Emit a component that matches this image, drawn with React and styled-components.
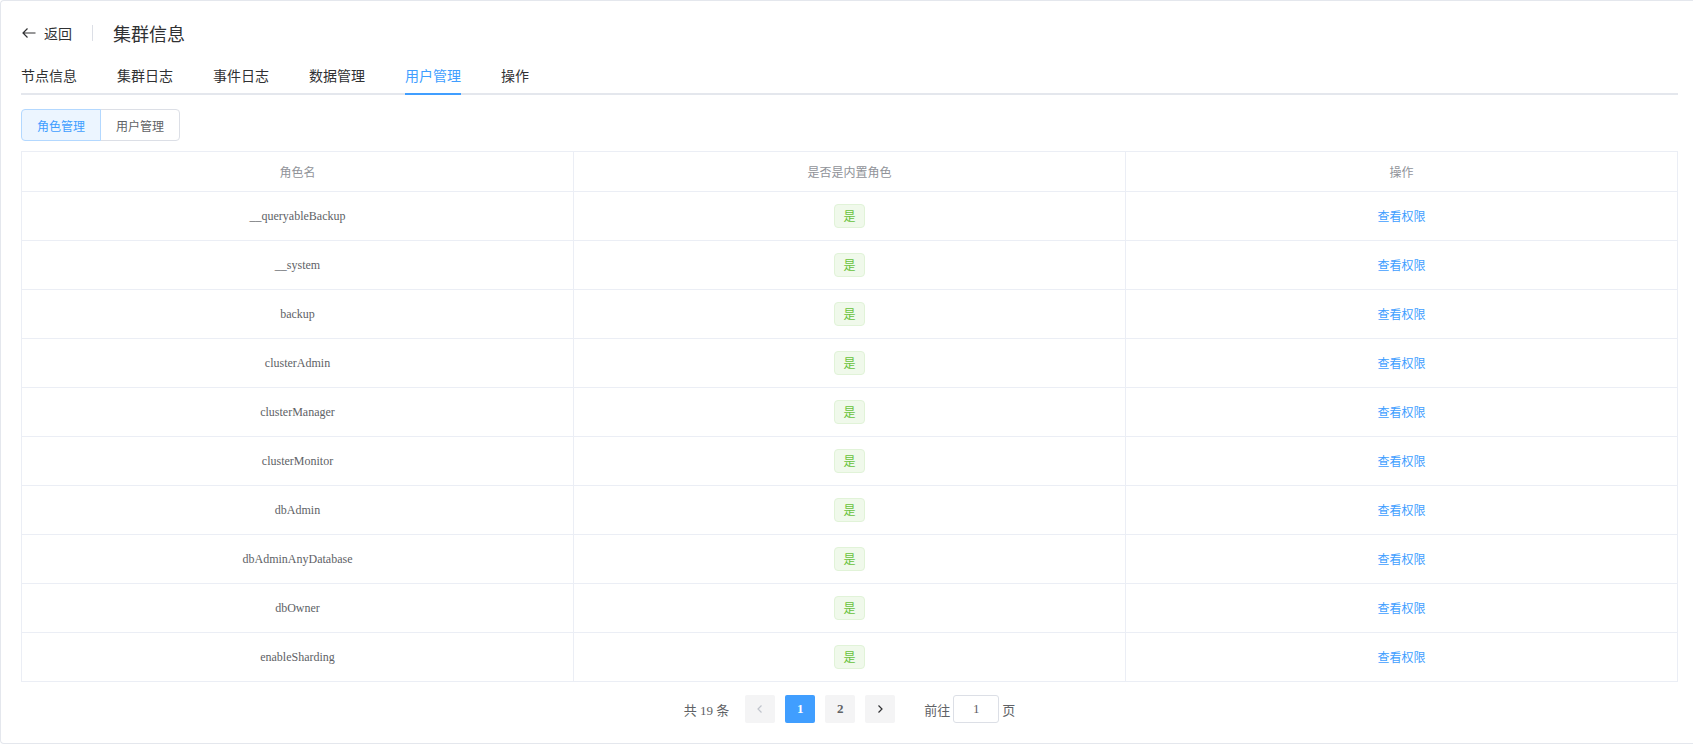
import React from "react";
import styled, { createGlobalStyle } from "styled-components";

const Global = createGlobalStyle`
  html, body { margin: 0; padding: 0; background: #fff; }
  body { font-family: "Liberation Serif", "Noto Sans CJK SC", serif; }
  * { box-sizing: border-box; }
`;

const Card = styled.div`
  width: 100%;
  height: 744px;
  border: 1px solid #e4e7ed;
  border-right: none;
  border-radius: 4px 0 0 4px;
  padding: 20px 15px 20px 20px;
  background: #fff;
  display: flex;
  flex-direction: column;
`;

const PageHeader = styled.div`
  display: flex;
  align-items: center;
  height: 24px;
  line-height: 24px;
  color: #303133;
`;

const Back = styled.div`
  display: flex;
  align-items: center;
  gap: 7px;
  font-size: 14px;
  font-family: "Noto Sans CJK SC", sans-serif;
  cursor: pointer;
`;

const Divider = styled.span`
  width: 1px;
  height: 16px;
  background: #dcdfe6;
  margin: 0 20px;
`;

const Title = styled.div`
  font-size: 18px;
  font-family: "Noto Sans CJK SC", sans-serif;
  color: #303133;
`;

const TabBar = styled.div`
  margin-top: 10px;
  display: flex;
  gap: 40px;
  height: 40px;
  border-bottom: 2px solid #e4e7ed;
`;

const Tab = styled.div`
  height: 40px;
  line-height: 40px;
  margin-bottom: -2px;
  border-bottom: 2px solid ${(p) => (p.$active ? "#409eff" : "transparent")};
  font-size: 14px;
  font-family: "Noto Sans CJK SC", sans-serif;
  color: ${(p) => (p.$active ? "#409eff" : "#303133")};
  cursor: pointer;
`;

const BtnGroup = styled.div`
  margin-top: 14px;
  display: flex;
`;

const SegBtn = styled.button`
  height: 32px;
  padding: 0 15px;
  font-size: 12px;
  font-family: "Noto Sans CJK SC", sans-serif;
  border: 1px solid ${(p) => (p.$active ? "#b3d8ff" : "#dcdfe6")};
  background: ${(p) => (p.$active ? "#ecf5ff" : "#fff")};
  color: ${(p) => (p.$active ? "#409eff" : "#606266")};
  border-radius: ${(p) => (p.$first ? "4px 0 0 4px" : "0 4px 4px 0")};
  margin-left: ${(p) => (p.$first ? "0" : "-1px")};
  position: relative;
  z-index: ${(p) => (p.$active ? 1 : 0)};
  cursor: pointer;
`;

const Table = styled.table`
  margin-top: 10px;
  width: 100%;
  border-collapse: collapse;
  table-layout: fixed;
`;

const Th = styled.th`
  height: 40px;
  border: 1px solid #ebeef5;
  font-size: 12px;
  font-weight: normal;
  color: #909399;
  font-family: "Noto Sans CJK SC", sans-serif;
  text-align: center;
  padding: 0;
`;

const Td = styled.td`
  height: 49px;
  border: 1px solid #ebeef5;
  font-size: 12px;
  color: #606266;
  text-align: center;
  padding: 0;
`;

const Tag = styled.span`
  display: inline-block;
  height: 24px;
  line-height: 22px;
  padding: 0 8px;
  font-size: 12px;
  font-family: "Noto Sans CJK SC", sans-serif;
  color: #67c23a;
  background: #f0f9eb;
  border: 1px solid #e1f3d8;
  border-radius: 4px;
  vertical-align: middle;
`;

const Link = styled.a`
  font-size: 12px;
  font-family: "Noto Sans CJK SC", sans-serif;
  color: #409eff;
  cursor: pointer;
`;

const Pager = styled.div`
  margin-top: 13px;
  display: flex;
  justify-content: center;
  align-items: center;
  height: 28px;
  font-size: 13px;
  color: #606266;
`;

const Total = styled.span`
  margin-right: 11px;
`;

const PageBtn = styled.div`
  width: 30px;
  height: 28px;
  margin: 0 5px;
  border-radius: 2px;
  display: flex;
  align-items: center;
  justify-content: center;
  font-weight: bold;
  font-size: 13px;
  background: ${(p) => (p.$active ? "#409eff" : "#f4f4f5")};
  color: ${(p) => (p.$active ? "#fff" : p.$disabled ? "#c0c4cc" : "#606266")};
  cursor: pointer;
`;

const Jump = styled.div`
  margin-left: 24px;
  display: flex;
  align-items: center;
  gap: 3px;
  font-family: "Noto Sans CJK SC", sans-serif;
`;

const JumpInput = styled.input`
  width: 46px;
  height: 28px;
  border: 1px solid #dcdfe6;
  border-radius: 3px;
  text-align: center;
  font-size: 13px;
  font-family: "Liberation Serif", serif;
  color: #606266;
  outline: none;
  padding: 0;
`;

const roles = [
  "__queryableBackup",
  "__system",
  "backup",
  "clusterAdmin",
  "clusterManager",
  "clusterMonitor",
  "dbAdmin",
  "dbAdminAnyDatabase",
  "dbOwner",
  "enableSharding",
];

const tabs = ["节点信息", "集群日志", "事件日志", "数据管理", "用户管理", "操作"];

const Chevron = ({ dir, color }) => (
  <svg width="12" height="12" viewBox="0 0 12 12">
    <polyline
      points={dir === "left" ? "7.5,2.5 4,6 7.5,9.5" : "4.5,2.5 8,6 4.5,9.5"}
      fill="none"
      stroke={color}
      strokeWidth="1.2"
    />
  </svg>
);

export default function App() {
  return (
    <>
      <Global />
      <Card>
        <PageHeader>
          <Back>
            <svg width="16" height="16" viewBox="0 0 16 16">
              <path d="M14.5 8H2 M6.5 3.5L2 8l4.5 4.5" fill="none" stroke="#303133" strokeWidth="1.2" />
            </svg>
            返回
          </Back>
          <Divider />
          <Title>集群信息</Title>
        </PageHeader>
        <TabBar>
          {tabs.map((t) => (
            <Tab key={t} $active={t === "用户管理"}>
              {t}
            </Tab>
          ))}
        </TabBar>
        <BtnGroup>
          <SegBtn $active $first>
            角色管理
          </SegBtn>
          <SegBtn>用户管理</SegBtn>
        </BtnGroup>
        <Table>
          <thead>
            <tr>
              <Th>角色名</Th>
              <Th>是否是内置角色</Th>
              <Th>操作</Th>
            </tr>
          </thead>
          <tbody>
            {roles.map((r) => (
              <tr key={r}>
                <Td>{r}</Td>
                <Td>
                  <Tag>是</Tag>
                </Td>
                <Td>
                  <Link>查看权限</Link>
                </Td>
              </tr>
            ))}
          </tbody>
        </Table>
        <Pager>
          <Total>共 19 条</Total>
          <PageBtn $disabled>
            <Chevron dir="left" color="#c0c4cc" />
          </PageBtn>
          <PageBtn $active>1</PageBtn>
          <PageBtn>2</PageBtn>
          <PageBtn>
            <Chevron dir="right" color="#303133" />
          </PageBtn>
          <Jump>
            前往
            <JumpInput defaultValue="1" />
            页
          </Jump>
        </Pager>
      </Card>
    </>
  );
}
